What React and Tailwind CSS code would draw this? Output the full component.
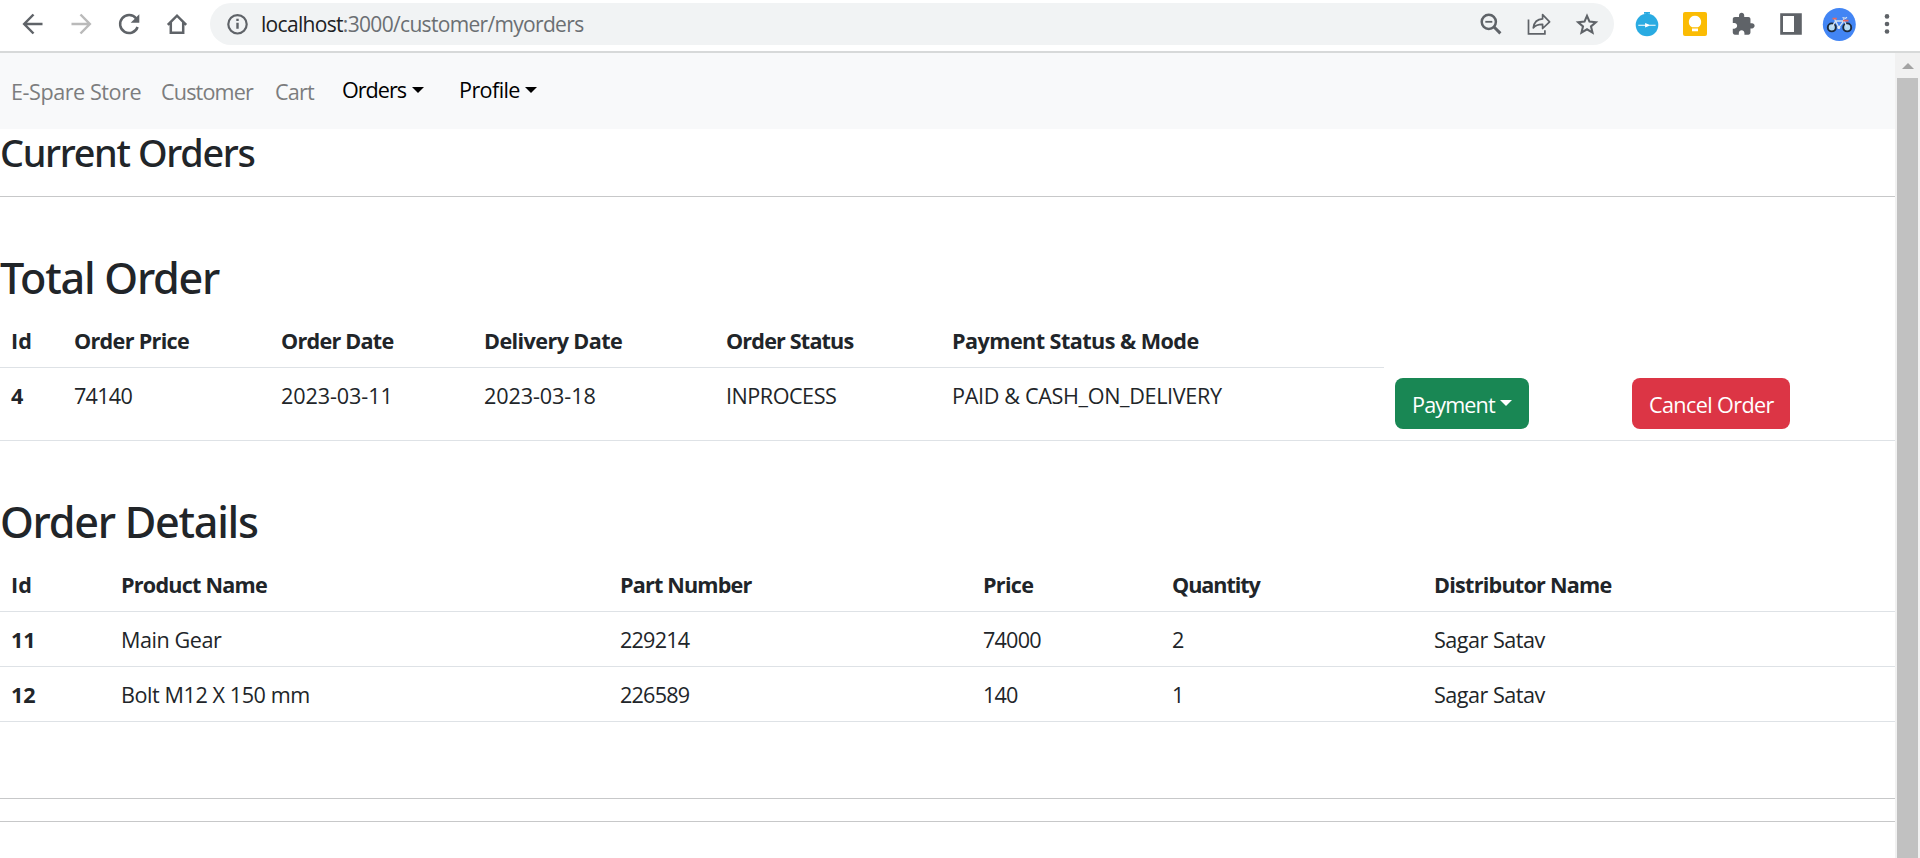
function Icon({ children }) {
  return (
    <svg className="h-12 w-12 shrink-0" viewBox="0 0 48 48" fill="none" stroke="#5f6368" strokeWidth="2.5">
      {children}
    </svg>
  );
}

function Browser() {
  return (
    <div className="flex h-[53px] items-start border-b-2 border-[#d7d9d9] bg-white pl-[9px]">
      <Icon><path d="M33.500 24H15.500M24.500 14.500L15.200 24l9.300 9.500" /></Icon>
      <Icon><path stroke="#bababa" d="M14.500 24H32.500M23.500 14.500L32.800 24l-9.300 9.500" /></Icon>
      <Icon>
        <path d="M31.2 18.5A9 9 0 1 0 32.6 27" />
        <path d="M34.3 14.2v8.6h-8.6z" fill="#5f6368" stroke="none" />
      </Icon>
      <Icon><path d="M14.8 24.8L24 15.7l9.2 9.1M17.8 22.5v10.2h12.4V22.5" /></Icon>

      <div className="ml-[9px] mt-[3px] flex h-[42px] w-[1404px] items-center rounded-full bg-[#f1f3f4] pl-1 pr-[3px]">
        <Icon>
          <g strokeWidth="2.2">
            <circle cx="23.5" cy="24.3" r="9.2" />
            <path d="M23.5 22.8v6M23.5 18.8v2.3" strokeWidth="2.4" />
          </g>
        </Icon>
        <div className="-ml-px grow whitespace-nowrap pt-[2px] text-[21px] tracking-[-0.68px] text-[#6b6f73]">
          <span className="text-[#202124]">localhost</span>:3000/customer/myorders
        </div>
        <Icon>
          <circle cx="21.8" cy="21.8" r="7.1" />
          <path d="M26.8 26.8l6.6 6.6" strokeWidth="3" />
          <path d="M18.3 21.8h7" strokeWidth="1.8" />
        </Icon>
        <Icon>
          <g strokeWidth="1.7">
            <path d="M13.5 19.5v14.4h16.4v-3.6" />
            <path d="M18.3 27.8c.8-5.8 4.5-8.7 9.3-8.9v-4.3l7 7.2-7 6.7v-4.1c-4.3-.2-7 .9-9.3 3.4z" strokeLinejoin="round" />
          </g>
        </Icon>
        <Icon>
          <path strokeWidth="2.1" d="M24 15.8l2.5 5.8 6.3.6-4.8 4.2 1.5 6.2-5.5-3.3-5.5 3.3 1.5-6.2-4.8-4.2 6.3-.6z" />
        </Icon>
      </div>

      <div className="ml-[9px] flex">
        <Icon>
          <g stroke="none">
            <path d="M21 12h6v1.8h-1.8v2.4h-2.4v-2.4H21z" fill="#29abe2" />
            <circle cx="24" cy="25" r="11.3" fill="#29abe2" />
            <path d="M15.3 24.700h6.800v-1.700l4.300 1.700h6.200v1h-6.200l-4.300 1.700v-1.700h-6.800z" fill="#fff" />
          </g>
        </Icon>
        <Icon>
          <g stroke="none">
            <rect x="12" y="12" width="24" height="24" rx="2" fill="#fbbc04" />
            <path d="M24 15.700a6.200 6.200 0 0 0-3 11.600h6a6.200 6.200 0 0 0-3-11.600zM21 28.500h6v2.800h-6z" fill="#fff" />
          </g>
        </Icon>
        <Icon>
          <path
            transform="translate(11.700 11.800) scale(1.04)"
            stroke="none"
            fill="#5f6368"
            d="M20.500 11H19V7c0-1.100-.9-2-2-2h-4V3.500C13 2.120 11.880 1 10.500 1S8 2.120 8 3.500V5H4c-1.100 0-1.990.9-1.990 2v3.800H3.500c1.490 0 2.700 1.210 2.700 2.700s-1.210 2.700-2.700 2.700H2V20c0 1.100.9 2 2 2h3.800v-1.500c0-1.490 1.210-2.700 2.700-2.700 1.490 0 2.700 1.210 2.700 2.700V22H17c1.100 0 2-.9 2-2v-4h1.500c1.380 0 2.500-1.120 2.500-2.500S21.880 11 20.500 11z"
          />
        </Icon>
        <Icon>
          <path d="M13.200 13.200h21.600v21.600H13.200zM16 16v16h11V16z" fill="#5f6368" fillRule="evenodd" stroke="none" />
        </Icon>
        <Icon>
          <circle cx="24.300" cy="24.500" r="16.500" fill="#4285f4" stroke="none" />
          <circle cx="16.800" cy="27.400" r="4" fill="#b5dcf6" stroke="#1c2b3d" strokeWidth="1.900" />
          <circle cx="32.200" cy="27.400" r="4" fill="#b5dcf6" stroke="#1c2b3d" strokeWidth="1.900" />
          <path d="M16.800 27.400l3.800-6.400h8.200l-5 6.600-4.200-8.500M32.200 27.400l-3.900-8.900" stroke="#d6e2ee" strokeWidth="1.300" />
          <path d="M17.500 18.700h4.300M28 20.700h5.500" stroke="#e8685f" strokeWidth="1.700" />
          <path d="M27.500 17.500l3 .8 1.500-1" stroke="#d6e2ee" strokeWidth="1.200" />
          <circle cx="23.800" cy="27.600" r="1.500" fill="#e9eef3" stroke="none" />
        </Icon>
        <Icon>
          <g fill="#5f6368" stroke="none">
            <circle cx="24" cy="16.400" r="2.300" />
            <circle cx="24" cy="24" r="2.300" />
            <circle cx="24" cy="31.500" r="2.300" />
          </g>
        </Icon>
      </div>
    </div>
  );
}

function Caret() {
  return <span className="ml-[5.5px] inline-block border-x-[6.5px] border-t-[6.5px] border-x-transparent border-t-current align-[5px]" />;
}

function Navbar() {
  return (
    <nav className="flex h-[76px] items-center whitespace-nowrap bg-[#f8f9fa] pb-[2px] pl-[11px] leading-[32px] text-[#7c7d7e]">
      <a className="mt-[3px] w-[150px] tracking-[-0.45px]">E-Spare Store</a>
      <a className="mt-[3px] w-[114px] tracking-[-0.85px]">Customer</a>
      <a className="mt-[3px] w-[67px] tracking-[-0.8px]">Cart</a>
      <a className="w-[117px] text-black"><span className="tracking-[-1px]">Orders</span><Caret /></a>
      <a className="text-black"><span className="tracking-[-0.6px]">Profile</span><Caret /></a>
    </nav>
  );
}

const cell = "pl-[11px] pt-[12px] pb-[10px] align-top leading-[32px] font-normal text-left";
const head = "h-[55px] border-b border-[#dee2e6] pl-[11px] pt-[12px] align-top text-left font-bold leading-[32px]";

function TotalOrder() {
  return (
    <section>
      <h2 className="h-[63px] pt-[2px] text-[43.2px] font-medium leading-[52px] tracking-[-1.25px] font-['Noto_Sans',sans-serif]">Total Order</h2>
      <table className="w-full table-fixed border-separate border-spacing-0 whitespace-nowrap">
        <colgroup>
          <col className="w-[63px]" />
          <col className="w-[207px]" />
          <col className="w-[203px]" />
          <col className="w-[242px]" />
          <col className="w-[226px]" />
          <col className="w-[443px]" />
          <col className="w-[237px]" />
          <col />
        </colgroup>
        <thead>
          <tr>
            <th className={head}>Id</th>
            <th className={`${head} tracking-[-0.69px]`}>Order Price</th>
            <th className={`${head} tracking-[-0.75px]`}>Order Date</th>
            <th className={`${head} tracking-[-0.59px]`}>Delivery Date</th>
            <th className={`${head} tracking-[-0.84px]`}>Order Status</th>
            <th className={`${head} tracking-[-0.55px]`}>Payment Status &amp; Mode</th>
          </tr>
        </thead>
        <tbody className="[&>tr>*]:h-[73px] [&>tr>*]:border-b [&>tr>*]:border-[#dee2e6]">
          <tr>
            <th className={head}>4</th>
            <td className={`${cell} tracking-[-0.75px]`}>74140</td>
            <td className={`${cell} tracking-[-0.1px]`}>2023-03-11</td>
            <td className={`${cell} tracking-[-0.1px]`}>2023-03-18</td>
            <td className={`${cell} tracking-[-0.48px]`}>INPROCESS</td>
            <td className={`${cell} tracking-[-0.34px]`}>PAID &amp; CASH_ON_DELIVERY</td>
            <td className="pl-[11px] pt-[10px] align-top">
              <button className="flex h-[51px] w-[134px] items-center rounded-lg bg-[#198754] pl-[17px] pt-[4px] text-white">
                <span className="tracking-[-0.86px]">Payment</span>
                <span className="-mt-[5px] ml-[5px] border-x-[6.5px] border-t-[6.5px] border-x-transparent border-t-white" />
              </button>
            </td>
            <td className="pl-[11px] pt-[10px] align-top">
              <button className="flex h-[51px] w-[158px] items-center rounded-lg bg-[#dc3545] pl-[17px] pt-[4px] tracking-[-0.62px] text-white">
                Cancel Order
              </button>
            </td>
          </tr>
        </tbody>
      </table>
    </section>
  );
}

const items = [
  ["11", "Main Gear", "229214", "74000", "2", "Sagar Satav"],
  ["12", "Bolt M12 X 150 mm", "226589", "140", "1", "Sagar Satav"],
];

function OrderDetails() {
  return (
    <section>
      <h2 className="h-[63px] pt-[2px] text-[43.2px] font-medium leading-[52px] tracking-[-1.27px] font-['Noto_Sans',sans-serif]">Order Details</h2>
      <table className="w-full table-fixed border-separate border-spacing-0 whitespace-nowrap">
        <colgroup>
          <col className="w-[110px]" />
          <col className="w-[499px]" />
          <col className="w-[363px]" />
          <col className="w-[189px]" />
          <col className="w-[262px]" />
          <col />
        </colgroup>
        <thead>
          <tr>
            <th className={head}>Id</th>
            <th className={`${head} tracking-[-0.77px]`}>Product Name</th>
            <th className={`${head} tracking-[-0.83px]`}>Part Number</th>
            <th className={`${head} tracking-[-0.7px]`}>Price</th>
            <th className={`${head} tracking-[-1.05px]`}>Quantity</th>
            <th className={`${head} tracking-[-0.76px]`}>Distributor Name</th>
          </tr>
        </thead>
        <tbody className="[&>tr>*]:h-[55px] [&>tr>*]:border-b [&>tr>*]:border-[#dee2e6]">
          {items.map(([id, name, part, price, qty, dist]) => (
            <tr key={id}>
              <th className={head}>{id}</th>
              <td className={`${cell} tracking-[-0.43px]`}>{name}</td>
              <td className={`${cell} tracking-[-0.8px]`}>{part}</td>
              <td className={`${cell} tracking-[-0.8px]`}>{price}</td>
              <td className={cell}>{qty}</td>
              <td className={`${cell} tracking-[-0.5px]`}>{dist}</td>
            </tr>
          ))}
        </tbody>
      </table>
    </section>
  );
}

export default function App() {
  return (
    <div className="flex h-[858px] w-[1920px] flex-col overflow-hidden bg-white font-['Open_Sans',sans-serif] text-[21.6px] text-[#212529]">
      <Browser />
      <div className="flex min-h-0 grow">
        <main className="w-[1895px]">
          <Navbar />
          <h3 className="h-[67px] pt-px text-[37.8px] font-medium leading-[46px] tracking-[-1.32px] font-['Noto_Sans',sans-serif]">Current Orders</h3>
          <hr className="mb-[53px] border-[#c7c8c9]" />
          <TotalOrder />
          <div className="h-[53px]" />
          <OrderDetails />
          <hr className="mt-[76px] border-[#c7c8c9]" />
          <hr className="mt-[22px] border-[#c7c8c9]" />
        </main>
        <aside className="flex w-[25px] flex-col bg-[#f1f1f1] px-[2px]">
          <div className="flex h-[25px] shrink-0 items-center justify-center">
            <span className="border-x-[6px] border-b-[6px] border-x-transparent border-b-[#a3a3a3]" />
          </div>
          <div className="grow bg-[#c1c1c1]" />
        </aside>
      </div>
    </div>
  );
}
